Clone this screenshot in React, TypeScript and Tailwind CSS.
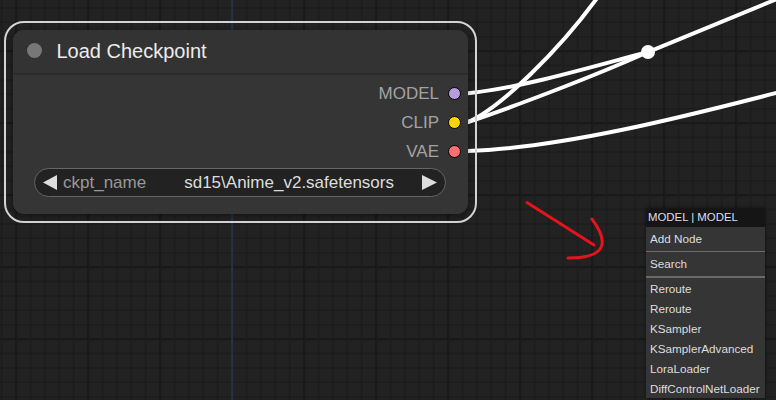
import React from "react";

const W = 776;
const H = 400;

function Grid() {
  const vs = Array.from({ length: 55 }, (_, k) => k);
  const hs = Array.from({ length: 29 }, (_, k) => k);
  return (
    <svg className="absolute inset-0" width={W} height={H}>
      {hs.map((k) => {
        const y = 7.9 + 14.4 * k;
        const major = k % 5 === 3;
        return (
          <line key={"h" + k} x1={0} x2={W} y1={y} y2={y} stroke={major ? "#191919" : "#1d1d1d"} strokeWidth={major ? 2.2 : 1.5} />
        );
      })}
      {vs.map((k) => {
        const x = 1.7 + 14.4 * k;
        const major = k % 5 === 1;
        const axis = k === 16;
        return (
          <line
            key={"v" + k}
            x1={x}
            x2={x}
            y1={0}
            y2={H}
            stroke={axis ? "#26324c" : major ? "#191919" : "#1d1d1d"}
            strokeWidth={axis ? 2 : major ? 2.2 : 1.5}
          />
        );
      })}
    </svg>
  );
}

function Wires() {
  return (
    <svg className="absolute inset-0" width={W} height={H}>
      <g fill="none" stroke="#fff" strokeWidth={4} strokeLinecap="round">
        <path d="M455,93.5 L468,93.3 C520,88 580,70 648,52 L782,-3" />
        <path d="M455,122.5 L468,122 C510,108 590,78 648,52" />
        <path d="M455,122.5 L468,122 C500,108 560,50 600,-6" />
        <path d="M455,151.5 L468,151 C560,148 680,118 782,91.5" />
      </g>
      <circle cx={648} cy={52} r={7} fill="#fff" />
      <g fill="none" stroke="#e3141c" strokeWidth={3} strokeLinecap="round">
        <path d="M527,202.5 L594,245" />
        <path d="M592,219 C606,238 612,258 568,258" />
      </g>
    </svg>
  );
}

function Slot({ label, color }: { label: string; color: string }) {
  return (
    <div className="flex h-[29px] items-center justify-end gap-[9px] pr-[7px]">
      <span className="text-[17px] leading-none text-[#a3a3a3]">{label}</span>
      <div className="h-[13px] w-[13px] rounded-full border-[1.5px] border-black" style={{ backgroundColor: color }} />
    </div>
  );
}

function Node() {
  return (
    <div
      className="absolute left-[4px] top-[21px] h-[202px] w-[473px] rounded-[20px] border-2 border-[#d4d4d4] p-[7px]"
      style={{ fontFamily: '"Liberation Sans", Arial, sans-serif' }}
    >
      <div className="flex h-full flex-col overflow-hidden rounded-[11px] bg-[#353535] shadow-[0_2px_6px_rgba(0,0,0,0.4)]">
        <div className="flex h-[45px] shrink-0 items-center gap-[15px] border-b-2 border-[#2c2c2c] bg-[#333] pl-[14px] pb-[2px]">
          <div className="h-[14.5px] w-[14.5px] rounded-full bg-[#777]" />
          <span className="text-[20px] leading-none text-[#ececec]">Load Checkpoint</span>
        </div>
        <div className="flex flex-col pt-[4px]">
          <Slot label="MODEL" color="#b39ddb" />
          <Slot label="CLIP" color="#ffd500" />
          <Slot label="VAE" color="#ff6e6e" />
        </div>
        <div className="ml-[21px] mt-[2px] flex h-[29px] w-[412px] items-center rounded-full border border-[#666] bg-[#222] pl-[8px] pr-[8px]">
          <svg width={14} height={15} viewBox="0 0 14 15" className="shrink-0">
            <polygon points="14,0 14,15 0,7.5" fill="#ddd" />
          </svg>
          <span className="ml-[6px] text-[17px] leading-none text-[#999]">ckpt_name</span>
          <span className="ml-auto mr-[28px] text-[17px] leading-none text-[#ddd]">sd15\Anime_v2.safetensors</span>
          <svg width={15} height={15} viewBox="0 0 15 15" className="shrink-0">
            <polygon points="0,0 0,15 15,7.5" fill="#ddd" />
          </svg>
        </div>
      </div>
    </div>
  );
}

function Menu() {
  const items = ["Reroute", "Reroute", "KSampler", "KSamplerAdvanced", "LoraLoader", "DiffControlNetLoader"];
  return (
    <div
      className="absolute left-[646px] top-[208px] flex w-[119px] flex-col bg-[#353535] pb-[0px] shadow-[0_0_4px_rgba(0,0,0,0.5)]"
      style={{ fontFamily: '"Liberation Sans", Tahoma, sans-serif' }}
    >
      <div className="flex h-[18.5px] items-center bg-[#151515] pl-[2px] text-[11.4px] text-[#dde]">MODEL | MODEL</div>
      <div className="flex h-[24px] items-center pl-[4px] text-[11.7px] text-[#ddd]">Add Node</div>
      <div className="h-[1.5px] bg-[#6a6a6a]" />
      <div className="flex h-[24px] items-center pl-[4px] text-[11.7px] text-[#ddd]">Search</div>
      <div className="h-[1.5px] bg-[#6a6a6a]" />
      <div className="flex flex-col pt-[1.5px]">
        {items.map((t, i) => (
          <div key={i} className="flex h-[19.9px] items-center pl-[4px] text-[11.7px] text-[#ddd]">
            {t}
          </div>
        ))}
      </div>
    </div>
  );
}

export default function App() {
  return (
    <div className="relative h-[400px] w-[776px] overflow-hidden bg-[#222]">
      <Grid />
      <Wires />
      <Node />
      <Menu />
    </div>
  );
}
